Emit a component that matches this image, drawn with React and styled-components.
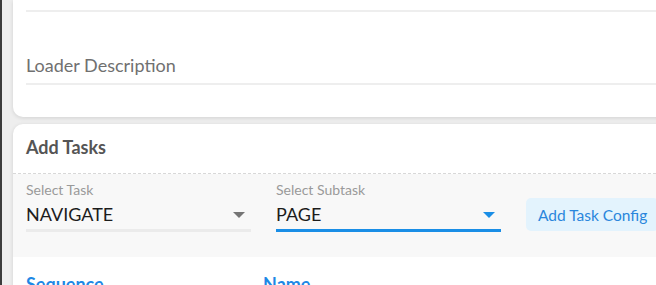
import React from "react";
import styled, { createGlobalStyle } from "styled-components";

const Global = createGlobalStyle`
  html, body { margin: 0; padding: 0; }
  body { font-family: Lato, "Noto Sans", sans-serif; background: #efefef; overflow: hidden; }
  * { box-sizing: border-box; }
`;

const Page = styled.div`
  display: flex;
  width: 656px;
  height: 285px;
  overflow: hidden;
  border-left: 2px solid #3c3c3c;
  background: #eeeeee;
`;

const Main = styled.div`
  flex: 1;
  padding-left: 11px;
  display: flex;
  flex-direction: column;
  gap: 7px;
  min-width: 0;
`;

const Card = styled.div`
  background: #fff;
  width: calc(100% + 30px);
  border-radius: ${(p) => p.$radius || "10px"};
  box-shadow: 0 1px 4px rgba(0, 0, 0, 0.12);
  flex-shrink: 0;
`;

const TopCard = styled(Card)`
  padding: 10px 0 32px 13px;
  border-radius: 0 0 10px 10px;
`;

const Underline = styled.div`
  height: ${(p) => p.$h || 2}px;
  background: ${(p) => p.$color || "#eeeeee"};
`;

const TextField = styled.div`
  display: flex;
  flex-direction: column;
`;

const FieldLabel = styled.div`
  font-size: 18px;
  color: #707070;
  line-height: 20px;
  padding-top: 43px;
  padding-bottom: 8px;
`;

const CardHeader = styled.div`
  height: 50px;
  padding: 12px 13px 0;
  font-size: 18px;
  line-height: 22px;
  font-weight: 700;
  color: #555;
  border-bottom: 1px dashed #d8d8d8;
`;

const FilterBar = styled.div`
  background: #f8f8f8;
  height: 83px;
  padding: 0 13px;
  display: flex;
  align-items: flex-start;
  gap: 25px;
`;

const Select = styled.div`
  width: 225px;
  padding-top: 8px;
  display: flex;
  flex-direction: column;
`;

const SelectLabel = styled.div`
  font-size: 14px;
  line-height: 16px;
  color: #9a9a9a;
`;

const SelectValueRow = styled.div`
  display: flex;
  align-items: center;
  justify-content: space-between;
  height: 31px;
  padding-right: 6px;
`;

const SelectValue = styled.div`
  font-size: 18px;
  color: #1c1c1c;
  line-height: 20px;
`;

const Caret = styled.span`
  width: 0;
  height: 0;
  border-left: 6px solid transparent;
  border-right: 6px solid transparent;
  border-top: 6px solid ${(p) => p.$color};
  margin-top: 3px;
`;

const Button = styled.button`
  margin-top: 24px;
  height: 33px;
  padding: 0 12px;
  border: none;
  border-radius: 5px;
  background: #e3f3fd;
  color: #2a86dc;
  font-family: Lato, "Noto Sans", sans-serif;
  font-size: 15.5px;
  white-space: nowrap;
  flex-shrink: 0;
`;

const TableHead = styled.div`
  display: grid;
  grid-template-columns: 237px 1fr;
  padding: 16px 13px 0;
`;

const HeadCell = styled.div`
  font-size: 18px;
  line-height: 22px;
  font-weight: 700;
  color: #1e88e5;
`;

export default function App() {
  return (
    <>
      <Global />
      <Page>
        <Main>
          <TopCard>
            <Underline />
            <TextField>
              <FieldLabel>Loader Description</FieldLabel>
              <Underline />
            </TextField>
          </TopCard>
          <Card $radius="10px 0 0 0">
            <CardHeader>Add Tasks</CardHeader>
            <FilterBar>
              <Select>
                <SelectLabel>Select Task</SelectLabel>
                <SelectValueRow>
                  <SelectValue>NAVIGATE</SelectValue>
                  <Caret $color="#757575" />
                </SelectValueRow>
                <Underline $h={3} $color="#ebebeb" />
              </Select>
              <Select>
                <SelectLabel>Select Subtask</SelectLabel>
                <SelectValueRow>
                  <SelectValue>PAGE</SelectValue>
                  <Caret $color="#1a8ee6" />
                </SelectValueRow>
                <Underline $h={3} $color="#1a8ee6" />
              </Select>
              <Button>Add Task Config</Button>
            </FilterBar>
            <TableHead>
              <HeadCell>Sequence</HeadCell>
              <HeadCell>Name</HeadCell>
            </TableHead>
          </Card>
        </Main>
      </Page>
    </>
  );
}
